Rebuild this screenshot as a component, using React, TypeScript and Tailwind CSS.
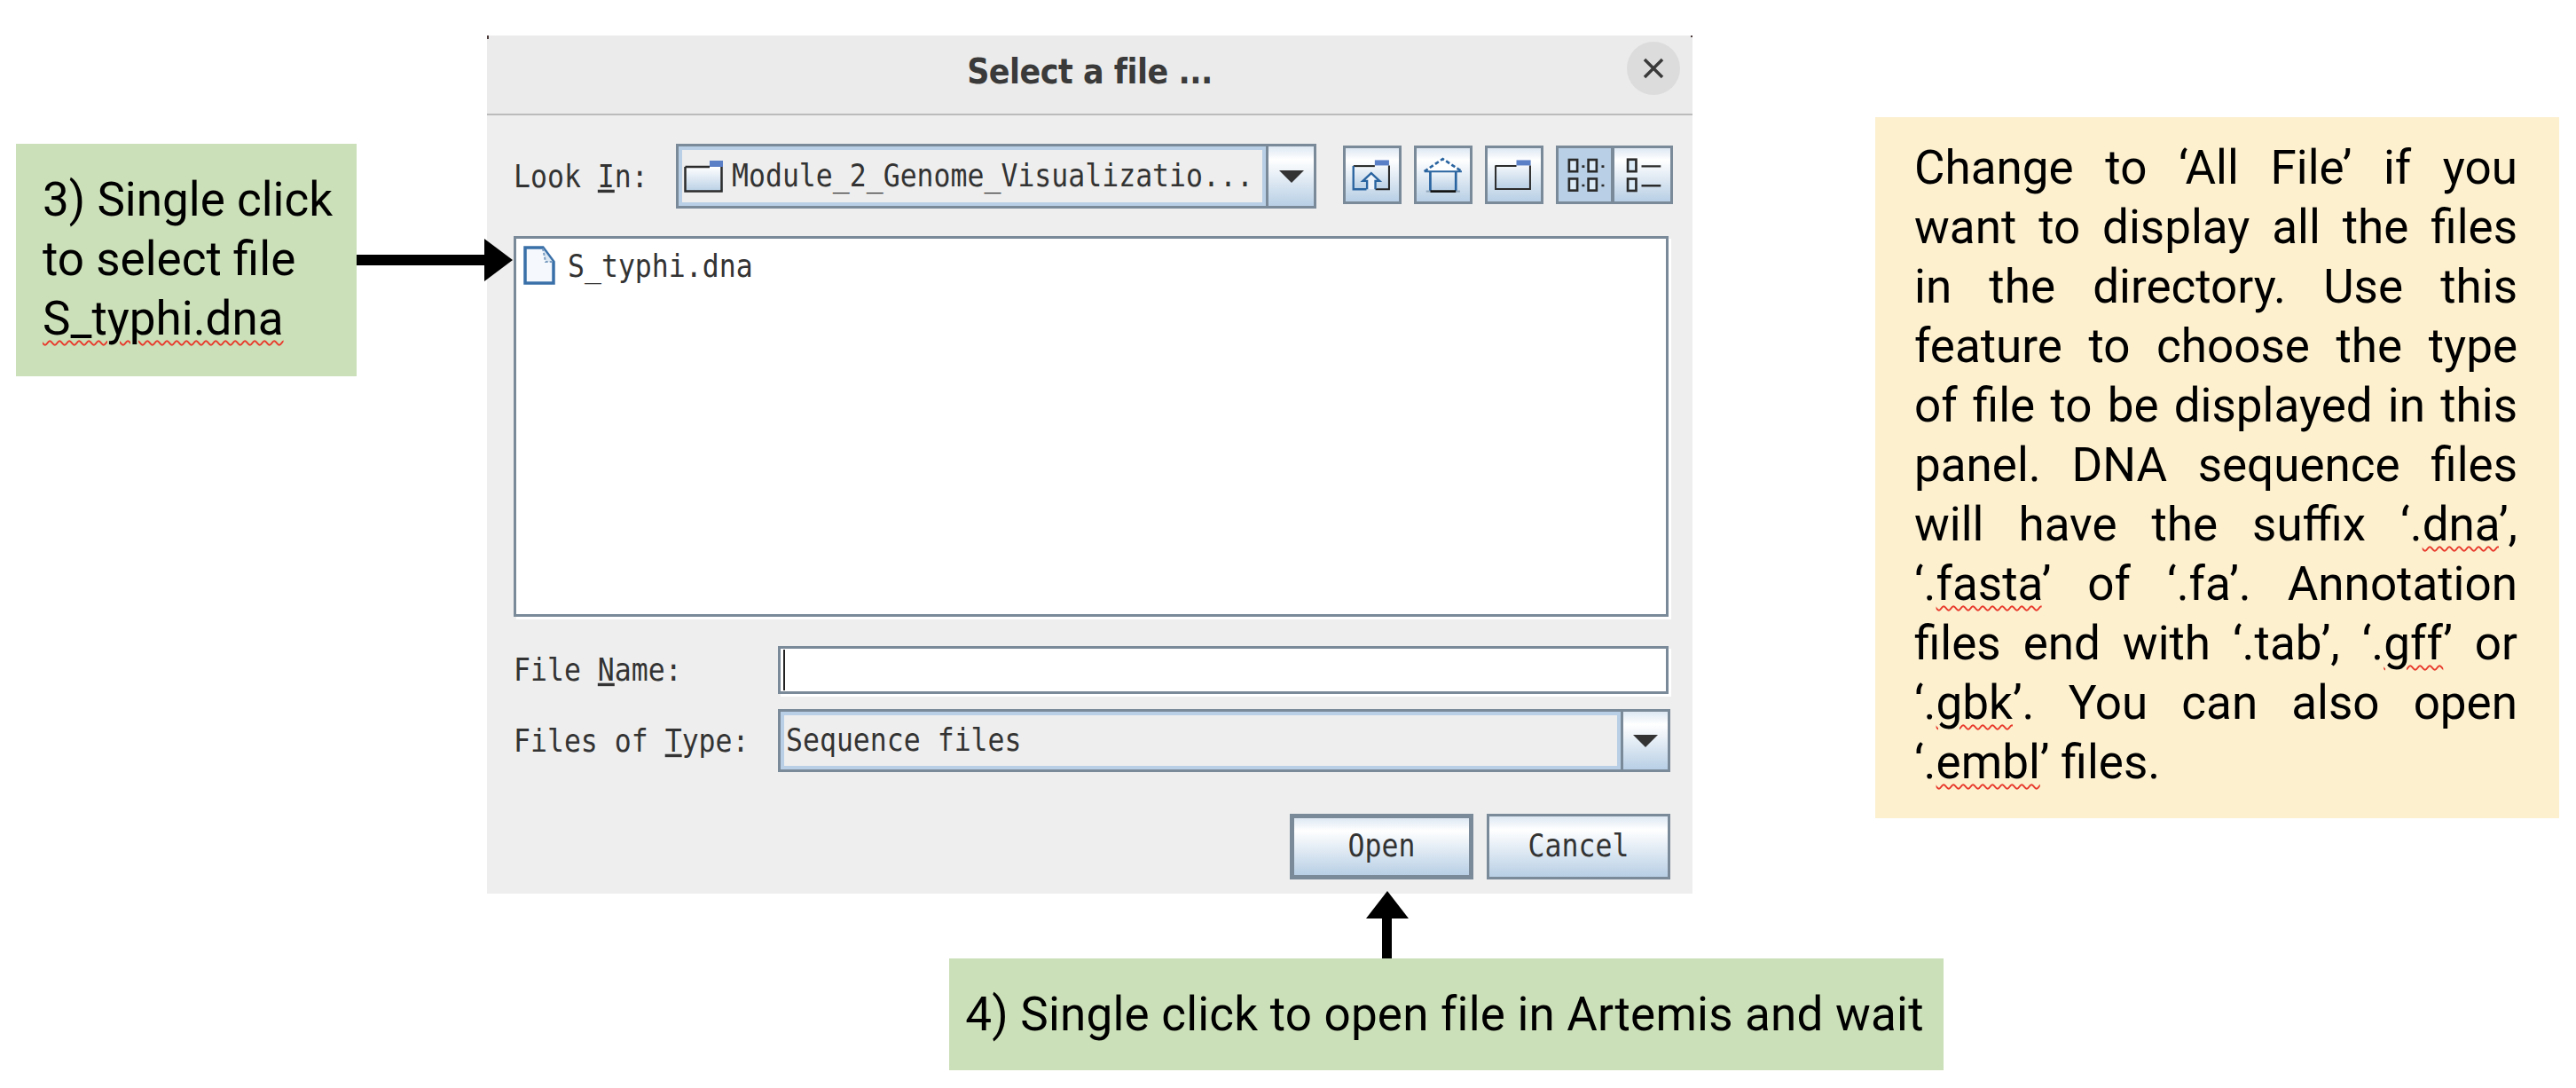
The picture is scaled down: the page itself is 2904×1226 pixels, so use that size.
import type { ReactNode } from 'react';

const gradient = 'bg-[linear-gradient(to_bottom,#dde8f3,#ffffff_22%,#b8cfe5)]';
const mono = "inline-block scale-y-[1.14] [font-family:'DejaVu_Sans_Mono',monospace] text-[31.5px] text-[#333333] whitespace-pre";
const note = "[font-family:Roboto,sans-serif] text-[53px] leading-[67px] text-black whitespace-nowrap";
const squiggle = 'underline decoration-wavy decoration-[#e8392b] decoration-2 underline-offset-[6px]';

const Down = () => (
  <svg width="28" height="14" viewBox="0 0 28 14">
    <polygon points="0,0 28,0 14,14" fill="#333333" />
  </svg>
);

function ToolIcon({ box, children }: { box: string; children: ReactNode }) {
  return (
    <svg viewBox={box} className="h-[60px] w-[60px]" fill="none">
      <defs>
        <linearGradient id="fold" x1="0" y1="0" x2="0" y2="1">
          <stop offset="0" stopColor="#f2f6fa" />
          <stop offset="1" stopColor="#b8cfe5" />
        </linearGradient>
      </defs>
      {children}
    </svg>
  );
}

const DocBox = ({ x, y }: { x: number; y: number }) => (
  <rect x={x} y={y} width="28" height="40" fill="#dcebf8" stroke="#2b2b2b" strokeWidth="8" />
);

function Tool({ className = gradient, children }: { className?: string; children: ReactNode }) {
  return (
    <div className={`flex h-[66px] w-[66px] shrink-0 items-center justify-center border-[3px] border-[#7a8a99] ${className}`}>
      {children}
    </div>
  );
}

function Combo({ width, height, arrow, children }: { width: string; height: string; arrow: string; children: ReactNode }) {
  return (
    <div className={`flex ${width} ${height} shrink-0 border-[3px] border-[#7a8a99]`}>
      <div className="flex min-w-0 flex-1 items-center gap-[10px] border-[4px] border-[#b8cfe5] bg-[#eeeeee] pl-[2px]">
        {children}
      </div>
      <div className={`flex ${arrow} shrink-0 items-center justify-center border-l-[3px] border-[#7a8a99] ${gradient}`}>
        <Down />
      </div>
    </div>
  );
}

function Dialog() {
  return (
    <div className="relative ml-[147px] h-[967px] w-[1359px] shrink-0 bg-[#eeeeee]">
      <div className="flex h-[90px] items-center justify-center border-b-2 border-[#bbbbbb] bg-[#ebebeb] pb-[6px]">
        <span className="inline-block scale-y-[1.12] [font-family:'DejaVu_Sans',sans-serif] text-[35px] font-bold tracking-[-0.5px] text-[#3a3a3a]">Select a file ...</span>
      </div>
      <button className="absolute right-[14px] top-[7px] flex h-[60px] w-[60px] items-center justify-center rounded-full bg-[#dcdcdc]">
        <svg width="24" height="24" viewBox="0 0 24 24">
          <path d="M2 2 L22 22 M22 2 L2 22" stroke="#3a3a3a" strokeWidth="3.5" />
        </svg>
      </button>
      <div className="absolute left-0 top-0 h-[4px] w-[2px] bg-[#4a3a3a]" />
      <div className="absolute right-0 top-0 h-[2px] w-[2px] bg-[#4a3a3a]" />

      <div className="pl-[30px] pr-[25px] pt-[32px]">
        <div className="flex items-start">
          <label className="flex h-[73px] w-[183px] shrink-0 items-center pt-[2px]">
            <span className={mono}>Look <u>I</u>n:</span>
          </label>
          <Combo width="w-[722px]" height="h-[73px]" arrow="w-[54px]">
            <svg width="44" height="36" viewBox="0 0 44 36" className="shrink-0">
              <defs>
                <linearGradient id="look" x1="0" y1="0" x2="0" y2="1">
                  <stop offset="0" stopColor="#ffffff" />
                  <stop offset="1" stopColor="#b8cfe5" />
                </linearGradient>
              </defs>
              <path d="M1 7 H44 V35 H1 Z" fill="url(#look)" />
              <rect x="29" y="0" width="15" height="7" fill="#5b7fc6" />
              <path d="M1.5 7 H29 M1.5 7 V34.5 H42.5 V7" stroke="#2b2b2b" strokeWidth="2.5" fill="none" />
            </svg>
            <span className={mono}>Module_2_Genome_Visualizatio...</span>
          </Combo>
          <div className="ml-[30px] mt-[2px] flex gap-[14px]">
            <Tool>
              <ToolIcon box="52 52 179 179">
                <path d="M78 112 H198 V190 H78 Z" fill="url(#fold)" />
                <rect x="150" y="92" width="48" height="18" fill="#5b7fc6" />
                <path d="M78 112 H150" stroke="#222222" strokeWidth="6" />
                <path d="M78 112 V190 H122" stroke="#2a64a0" strokeWidth="7" />
                <path d="M152 190 H198 V110" stroke="#222222" strokeWidth="6" />
                <path d="M124 190 V162 H110 L138 136 L166 162 H152 V190" stroke="#2a64a0" strokeWidth="7" fill="#eef4fa" />
              </ToolIcon>
            </Tool>
            <Tool>
              <ToolIcon box="290 52 179 179">
                <path d="M336 130 H422 V195 H336 Z" fill="url(#fold)" />
                <path d="M316 130 L378 88 L442 130 Z" fill="#ffffff" />
                <path d="M316 130 L378 88 L442 130" stroke="#2a64a0" strokeWidth="8" strokeDasharray="14 8" />
                <path d="M316 130 H442" stroke="#2a64a0" strokeWidth="6" />
                <path d="M336 130 V195 M422 130 V195" stroke="#2a64a0" strokeWidth="8" />
                <path d="M322 197 H336" stroke="#8fa5bb" strokeWidth="6" />
                <path d="M422 197 H436" stroke="#8fa5bb" strokeWidth="6" />
                <path d="M336 197 H422" stroke="#111111" strokeWidth="8" />
              </ToolIcon>
            </Tool>
            <Tool>
              <ToolIcon box="528 52 179 179">
                <path d="M553 112 H673 V190 H553 Z" fill="url(#fold)" />
                <rect x="625" y="92" width="48" height="18" fill="#5b7fc6" />
                <path d="M553 112 H625 M555 112 V189 H671 V110" stroke="#2b2b2b" strokeWidth="6" />
              </ToolIcon>
            </Tool>
            <div className="flex">
              <Tool className="border-r-[4px] bg-[#b8cfe5]">
                <ToolIcon box="766 52 179 179">
                  <DocBox x={802} y={90} />
                  <DocBox x={868} y={90} />
                  <DocBox x={802} y={155} />
                  <DocBox x={868} y={155} />
                  <path d="M846 113 h9 M913 113 h9 M846 178 h9 M913 178 h9" stroke="#2b2b2b" strokeWidth="8" />
                </ToolIcon>
              </Tool>
              <Tool className={`border-l-0 ${gradient}`}>
                <ToolIcon box="960 52 179 179">
                  <DocBox x={999} y={90} />
                  <DocBox x={999} y={155} />
                  <path d="M1045 113 H1110 M1045 178 H1110" stroke="#2b2b2b" strokeWidth="7" />
                </ToolIcon>
              </Tool>
            </div>
          </div>
        </div>

        <div className="mt-[31px] flex h-[429px] w-[1302px] items-start gap-[14px] border-[3px] border-[#7a8a99] bg-white pl-[8px] pt-[8px] shadow-[3px_3px_0_#ffffff]">
          <svg width="36" height="44" viewBox="0 0 36 44" className="shrink-0">
            <path d="M2 2 H22 L34 18 V42 H2 Z" fill="#f5f9fd" stroke="#3a70a8" strokeWidth="3.5" />
            <path d="M22 3 L25 18 H33" fill="#dbe7f2" stroke="#7a9cc0" strokeWidth="2" strokeDasharray="3 2" />
          </svg>
          <span className={mono}>S_typhi.dna</span>
        </div>

        <div className="mt-[33px] flex items-center">
          <label className="w-[298px] shrink-0 pt-[2px]">
            <span className={mono}>File <u>N</u>ame:</span>
          </label>
          <div className="flex h-[54px] w-[1004px] items-center border-[3px] border-[#7a8a99] bg-white pl-[3px] shadow-[3px_3px_0_#ffffff]">
            <div className="h-[46px] w-[2px] bg-[#222222]" />
          </div>
        </div>

        <div className="mt-[17px] flex items-center">
          <label className="w-[298px] shrink-0 pt-[2px]">
            <span className={mono}>Files of <u>T</u>ype:</span>
          </label>
          <Combo width="w-[1006px]" height="h-[71px]" arrow="w-[53px]">
            <span className={mono}>Sequence files</span>
          </Combo>
        </div>

        <div className="mt-[47px] flex justify-end gap-[15px]">
          <button className={`h-[74px] w-[207px] border-[5px] border-[#7a8a99] ${gradient}`}>
            <span className={mono}>Open</span>
          </button>
          <button className={`h-[74px] w-[207px] border-[3px] border-[#7a8a99] ${gradient}`}>
            <span className={mono}>Cancel</span>
          </button>
        </div>
      </div>
    </div>
  );
}

const yellowLines = [
  <>Change to ‘All File’ if you</>,
  <>want to display all the files</>,
  <>in the directory. Use this</>,
  <>feature to choose the type</>,
  <>of file to be displayed in this</>,
  <>panel. DNA sequence files</>,
  <>will have the suffix ‘.<span className={squiggle}>dna</span>’,</>,
  <>‘.<span className={squiggle}>fasta</span>’ of ‘.fa’. Annotation</>,
  <>files end with ‘.tab’, ‘.<span className={squiggle}>gff</span>’ or</>,
  <>‘.<span className={squiggle}>gbk</span>’. You can also open</>,
];

export default function App() {
  return (
    <div className="relative h-[1226px] w-[2904px] overflow-hidden bg-white">
      <div className="flex items-start pt-[40px]">
        <div className={`${note} ml-[18px] mt-[122px] h-[262px] w-[384px] shrink-0 bg-[#cbdfb8] pl-[30px] pt-[30px]`}>
          <div>3) Single click</div>
          <div>to select file</div>
          <div className={squiggle}>S_typhi.dna</div>
        </div>
        <Dialog />
        <div className={`${note} ml-[206px] mt-[92px] h-[790px] w-[771px] shrink-0 bg-[#fcf0cf] pl-[44px] pr-[47px] pt-[24px]`}>
          {yellowLines.map((line, i) => (
            <div key={i} className="whitespace-normal text-justify [text-align-last:justify]">{line}</div>
          ))}
          <div>‘.<span className={squiggle}>embl</span>’ files.</div>
        </div>
      </div>

      <div className={`${note} ml-[1070px] mt-[73px] flex h-[126px] w-[1121px] items-center justify-center bg-[#cbdfb8] pr-[4px] tracking-[0.2px]`}>
        4) Single click to open file in Artemis and wait
      </div>

      {/* arrows lie over the boxes and the dialog */}
      <svg className="absolute left-[402px] top-[269px]" width="176" height="48" viewBox="0 0 176 48">
        <path d="M0 18 H144 V0 L176 24 L144 48 V30 H0 Z" fill="#000000" />
      </svg>
      <svg className="absolute left-[1540px] top-[1004px]" width="48" height="76" viewBox="0 0 48 76">
        <path d="M24 0 L48 31 H29 V76 H18 V31 H0 Z" fill="#000000" />
      </svg>
    </div>
  );
}
